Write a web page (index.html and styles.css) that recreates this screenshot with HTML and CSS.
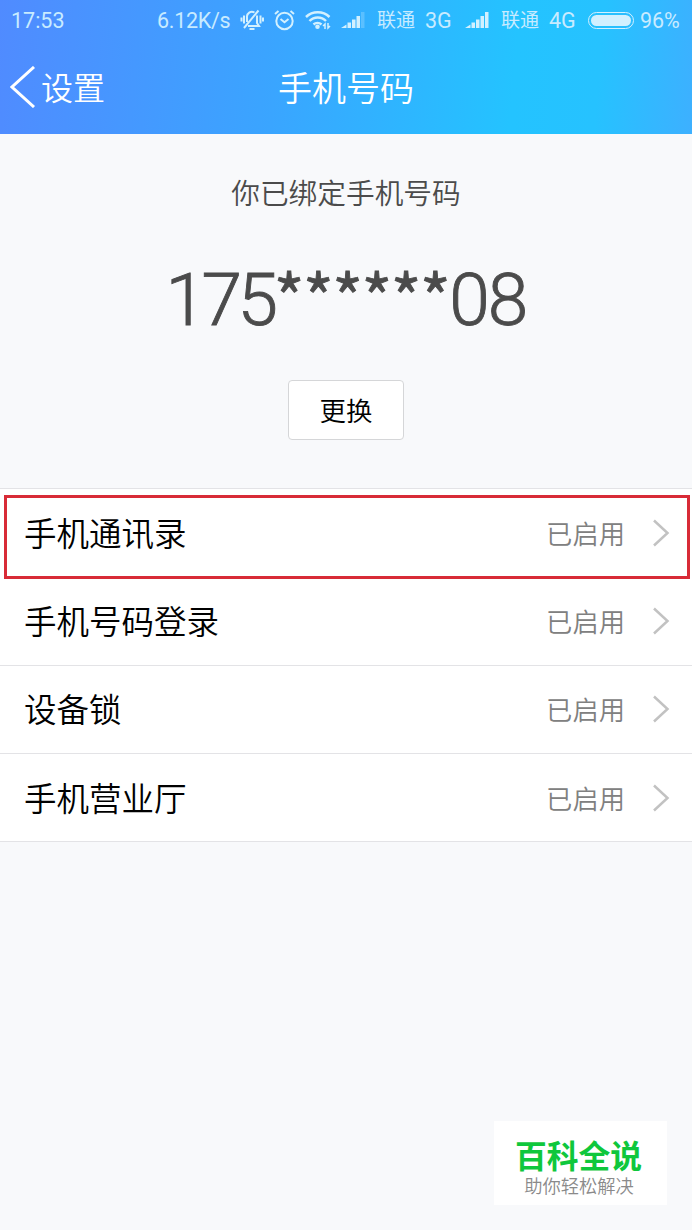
FILE: index.html
```
<!DOCTYPE html>
<html lang="zh-CN">

<head>
    <meta charset="UTF-8">
    <meta name="viewport" content="width=device-width, initial-scale=1.0">
    <title>手机号码</title>
    <link rel="stylesheet" href="styles.css">
</head>

<body>
    <header class="header">
        <div class="status-bar">
            <span class="time">17:53</span>
            <span class="speed">6.12K/s</span>
            <svg class="icon-mute" width="24" height="22" viewBox="0 0 24 22">
                <path d="M7 13V8.5a5 5 0 0 1 7.500-5M17 6.500V14l2 3H8M9.500 20h5M4 6.500v8M20.500 6.500v8M1.500 8.500v4M23 8.500v4M4 19L18.500 1.500" />
            </svg>
            <svg class="icon-alarm" width="22" height="22" viewBox="0 0 22 22">
                <circle cx="10.500" cy="12" r="8.2" />
                <path d="M6.500 10l4 3.200 4-3.200M1 5l3.500-3M20 5l-3.500-3" />
            </svg>
            <svg class="icon-wifi" width="26" height="20" viewBox="0 0 26 20">
                <path d="M1 7a17 17 0 0 1 23.500 0M4.500 11a11.500 11.500 0 0 1 16.500 0M8.500 14.500a6 6 0 0 1 8 0" />
                <path class="fill" d="M12.500 14.500a2.300 2.300 0 1 1 0 4.600 2.300 2.300 0 0 1 0-4.600z" />
                <path class="thin" d="M20 19v-5l-2 2M23 13v5l2-2" />
            </svg>
            <svg class="icon-signal" width="24" height="18" viewBox="0 0 24 18">
                <path class="fill" d="M0 17L5.500 13.500V17zM6.500 11.500H10V17H6.500zM11 8.500h3.500V17H11zM15.500 5H19v12h-3.500z" />
                <path class="fill faint" d="M20 1h3.500v16H20z" />
            </svg>
            <span class="carrier">联通</span>
            <span class="network">3G</span>
            <svg class="icon-signal" width="24" height="18" viewBox="0 0 24 18">
                <path class="fill" d="M0 17L5.500 13.500V17zM6.500 11.500H10V17H6.500zM11 8.500h3.500V17H11zM15.500 5H19v12h-3.500zM20 1h3.500v16H20z" />
            </svg>
            <span class="carrier">联通</span>
            <span class="network">4G</span>
            <span class="battery"></span>
            <span class="percent">96%</span>
        </div>
        <div class="nav-bar">
            <a class="back">
                <svg width="26" height="42" viewBox="0 0 26 42">
                    <path d="M24 1L2 21l22 20" />
                </svg>
                <span>设置</span>
            </a>
            <h1>手机号码</h1>
        </div>
    </header>

    <section class="phone">
        <p class="phone-label">你已绑定手机号码</p>
        <p class="phone-number">175<span class="mask">******</span><span class="tail">08</span></p>
        <button class="change">更换</button>
    </section>

    <ul class="settings">
        <li class="highlight">
            <span class="name">手机通讯录</span>
            <span class="state">已启用</span>
            <svg class="arrow" width="18" height="28" viewBox="0 0 18 28"><path d="M2 1.5l13.500 12.500L2 26.500" /></svg>
        </li>
        <li>
            <span class="name">手机号码登录</span>
            <span class="state">已启用</span>
            <svg class="arrow" width="18" height="28" viewBox="0 0 18 28"><path d="M2 1.5l13.500 12.500L2 26.500" /></svg>
        </li>
        <li>
            <span class="name">设备锁</span>
            <span class="state">已启用</span>
            <svg class="arrow" width="18" height="28" viewBox="0 0 18 28"><path d="M2 1.5l13.500 12.500L2 26.500" /></svg>
        </li>
        <li>
            <span class="name">手机营业厅</span>
            <span class="state">已启用</span>
            <svg class="arrow" width="18" height="28" viewBox="0 0 18 28"><path d="M2 1.5l13.500 12.500L2 26.500" /></svg>
        </li>
    </ul>

    <div class="watermark">
        <strong>百科全说</strong>
        <span>助你轻松解决</span>
    </div>
</body>

</html>
```
FILE: styles.css
```
*,
*::after {
    box-sizing: border-box;
}

body {
    margin: 0;
    height: 1230px;
    position: relative;
    overflow: hidden;
    background-color: #f8f9fb;
    font-family: "Noto Sans CJK SC", sans-serif;
    font-weight: 350;
    color: #000;
}

.header {
    height: 134px;
    background: linear-gradient(95deg, #508bff 0%, #3aa5ff 40%, #24c3ff 74%, #26c2ff 86%, #3db0ff 100%);
    color: #fff;
}

.status-bar {
    display: flex;
    align-items: center;
    height: 40px;
    padding-left: 11px;
    font-family: Roboto, "Noto Sans CJK SC", sans-serif;
    font-size: 21.5px;
    font-weight: 400;
    line-height: 41px;
    white-space: nowrap;
    color: #c8ebff;
}

.status-bar span,
.status-bar svg {
    flex: none;
}

.status-bar svg {
    fill: none;
    stroke: #d2f0ff;
    stroke-width: 2;
}

.status-bar .fill {
    fill: #d2f0ff;
    stroke: none;
}

.status-bar .faint {
    opacity: 0.25;
}

.status-bar .thin {
    stroke-width: 1.5;
}

.status-bar .icon-wifi {
    stroke-width: 2.5;
}

.time {
    width: 146px;
}

.speed {
    width: 83px;
    letter-spacing: -0.3px;
}

.icon-mute {
    margin-right: 10px;
}

.icon-alarm {
    margin-right: 9px;
}

.icon-wifi {
    margin-right: 10px;
}

.icon-signal {
    margin-right: 12px;
}

.carrier {
    width: 48px;
    font-size: 19px;
}

.network {
    width: 40px;
}

.network + .battery {
    margin-left: -1px;
}

.battery {
    width: 46px;
    height: 17px;
    padding: 2px;
    border: 1px solid #d2f0ff;
    border-radius: 9px;
    background: #d2f0ff content-box;
    background-clip: content-box;
}

.percent {
    margin-left: 6px;
    letter-spacing: -0.1px;
}

.nav-bar {
    display: grid;
    grid-template-columns: 1fr auto 1fr;
    align-items: center;
    height: 94px;
    padding: 0 10px;
}

.back {
    display: flex;
    align-items: center;
    gap: 5px;
    font-size: 32px;
}

.back span {
    margin-top: -3px;
}

.back svg {
    fill: none;
    stroke: #fff;
    stroke-width: 3;
}

.nav-bar h1 {
    margin: -1px 0 0;
    font-size: 34px;
    font-weight: 350;
    line-height: 92px;
}

.phone {
    display: flex;
    flex-direction: column;
    align-items: center;
    height: 354px;
    padding-top: 38px;
    color: #4b4b4b;
}

.phone-label {
    margin: 0;
    font-size: 28.7px;
    line-height: 40px;
}

.phone-number {
    margin: 38px 0 0;
    font-family: Roboto, sans-serif;
    font-size: 73px;
    font-weight: 300;
    letter-spacing: -4.5px;
    line-height: 100px;
    -webkit-text-stroke: 0.9px #4b4b4b;
}

.mask {
    font-family: "Noto Sans CJK SC", sans-serif;
    font-size: 68px;
    font-weight: 350;
    letter-spacing: -2px;
    line-height: 0;
}

.tail {
    letter-spacing: -1.8px;
}

.change {
    width: 116px;
    height: 60px;
    margin-top: 30px;
    padding: 0 0 2px;
    border: 1px solid #d5d6d8;
    border-radius: 4px;
    background-color: #fff;
    font-family: inherit;
    font-size: 26.5px;
    font-weight: 350;
    color: #000;
}

.settings {
    margin: 0;
    padding: 0;
    list-style: none;
    border-top: 1px solid #e3e3e6;
    background-color: #fff;
}

.settings li {
    position: relative;
    display: flex;
    align-items: center;
    height: 88.3px;
    padding: 0 22px 0 24px;
    border-bottom: 1px solid #e3e3e6;
}

.settings li.highlight {
    border-bottom-color: transparent;
}

/* red frame around the first row */
.highlight::after {
    content: "";
    position: absolute;
    top: 6px;
    left: 4px;
    right: 2px;
    height: 84px;
    border: 3px solid #d82b37;
}

.name {
    flex: 1;
    font-size: 32.5px;
    line-height: 44px;
    margin-top: -2px;
}

.state {
    margin: -1px 27px 0 0;
    font-size: 26.3px;
    color: #808080;
}

.arrow {
    fill: none;
    stroke: #c2c2c2;
    stroke-width: 2.5;
}

.watermark {
    position: absolute;
    left: 494px;
    top: 1121px;
    width: 173px;
    height: 84px;
    display: flex;
    flex-direction: column;
    align-items: center;
    padding-top: 14px;
    background-color: #fff;
}

.watermark strong {
    font-size: 31.8px;
    font-weight: 700;
    line-height: 38px;
    color: #0fc73c;
    margin-right: 4px;
}

.watermark span {
    margin-right: 3px;
    font-size: 18.3px;
    line-height: 24px;
    color: #8a8a8a;
}
```
